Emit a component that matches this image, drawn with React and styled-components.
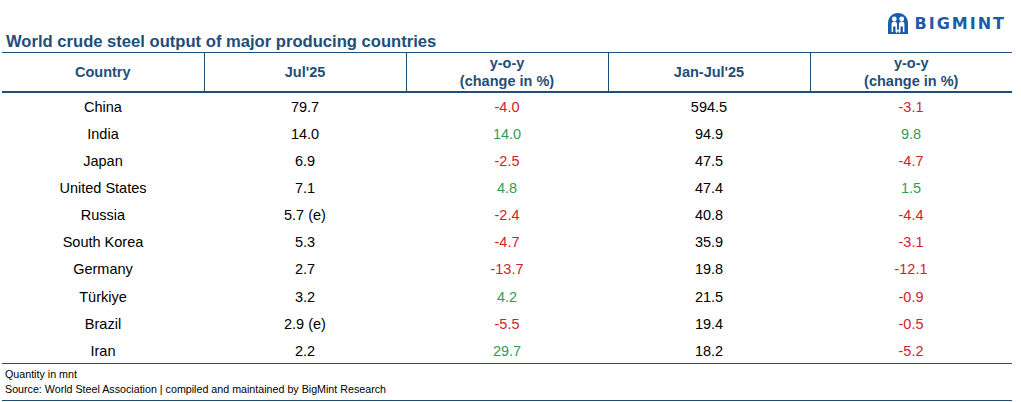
import styled, { createGlobalStyle } from 'styled-components';

const rows = [
	['China', '79.7', '-4.0', '594.5', '-3.1'],
	['India', '14.0', '14.0', '94.9', '9.8'],
	['Japan', '6.9', '-2.5', '47.5', '-4.7'],
	['United States', '7.1', '4.8', '47.4', '1.5'],
	['Russia', '5.7 (e)', '-2.4', '40.8', '-4.4'],
	['South Korea', '5.3', '-4.7', '35.9', '-3.1'],
	['Germany', '2.7', '-13.7', '19.8', '-12.1'],
	['Türkiye', '3.2', '4.2', '21.5', '-0.9'],
	['Brazil', '2.9 (e)', '-5.5', '19.4', '-0.5'],
	['Iran', '2.2', '29.7', '18.2', '-5.2'],
];

function App() {
	return (
		<>
			<GlobalStyle />
			<Page>
				<TopBar>
					<Title>World crude steel output of major producing countries</Title>
					<Logo>
						<svg width="22" height="23" viewBox="0 0 22 23">
							<path d="M11 1C5 1 1 5.5 1 11.5V22h20V11.5C21 5.5 17 1 11 1z" fill="#1b5ca8" />
							<circle cx="7.3" cy="7" r="2.4" fill="#fff" />
							<circle cx="14.7" cy="7" r="2.4" fill="#fff" />
							<path d="M4.6 12c0-1.4 1.1-2.4 2.7-2.4S10 10.6 10 12v8H8.5v-5.5H6.1V20H4.6z" fill="#fff" />
							<path d="M12 12c0-1.4 1.1-2.4 2.7-2.4s2.7 1 2.7 2.4v8h-1.5v-5.5h-2.4V20H12z" fill="#fff" />
							<path d="M9.4 21l1.6-3.4 1.6 3.4" stroke="#fff" strokeWidth="1" fill="none" />
						</svg>
						<LogoText>BIGMINT</LogoText>
					</Logo>
				</TopBar>
				<Table>
					<thead>
						<tr>
							<th>Country</th>
							<th>Jul'25</th>
							<th>
								y-o-y
								<br />
								(change in %)
							</th>
							<th>Jan-Jul'25</th>
							<th>
								y-o-y
								<br />
								(change in %)
							</th>
						</tr>
					</thead>
					<tbody>
						{rows.map((r) => (
							<tr key={r[0]}>
								<Cell>{r[0]}</Cell>
								<Cell>{r[1]}</Cell>
								<Cell $tone={r[2].startsWith('-') ? 'down' : 'up'}>{r[2]}</Cell>
								<Cell>{r[3]}</Cell>
								<Cell $tone={r[4].startsWith('-') ? 'down' : 'up'}>{r[4]}</Cell>
							</tr>
						))}
					</tbody>
				</Table>
				<Footer>
					<div>Quantity in mnt</div>
					<div>Source: World Steel Association | compiled and maintained by BigMint Research</div>
				</Footer>
			</Page>
		</>
	);
}

const GlobalStyle = createGlobalStyle`
	body {
		margin: 0;
		background: #fff;
		font-family: Arial, "Liberation Sans", sans-serif;
	}
`;

const Page = styled.div`
	width: 1010px;
	height: 402px;
	padding-left: 2px;
	overflow: hidden;
`;

const TopBar = styled.div`
	height: 52px;
	display: flex;
	justify-content: space-between;
	align-items: flex-start;
`;

const Title = styled.div`
	align-self: flex-end;
	padding-left: 4px;
	margin-bottom: 1px;
	font-size: 16.6px;
	font-weight: 700;
	color: #1f4e79;
	line-height: 18px;
`;

const Logo = styled.div`
	display: flex;
	align-items: center;
	gap: 6px;
	margin-top: 12px;
	margin-right: 6px;
`;

const LogoText = styled.span`
	font-family: "DejaVu Sans", Verdana, sans-serif;
	font-weight: 700;
	font-size: 16px;
	letter-spacing: 2px;
	color: #1b5ca8;
`;

const Table = styled.table`
	width: 1010px;
	border-collapse: collapse;
	table-layout: fixed;
	font-size: 14.5px;

	thead tr {
		border-top: 1px solid #1f4e79;
		border-bottom: 2px solid #1f4e79;
	}

	th {
		height: 38px;
		padding: 0;
		font-weight: 700;
		color: #1f4e79;
		line-height: 18px;
		text-align: center;
		vertical-align: middle;
	}

	th + th {
		border-left: 1px solid #1f4e79;
	}

	tbody tr {
		height: 27.15px;
	}

	tbody tr:last-child {
		border-bottom: 1px solid #1f4e79;
	}
`;

const Cell = styled.td`
	padding: 2px 0 0;
	text-align: center;
	vertical-align: middle;
	color: ${({ $tone }) => ($tone === 'down' ? '#d0222e' : $tone === 'up' ? '#2f9e55' : '#000')};
`;

const Footer = styled.div`
	width: 1010px;
	padding: 3px 0 3px 3px;
	font-size: 10.7px;
	line-height: 15px;
	color: #000;
	border-bottom: 1px solid #1f4e79;
`;

export default App;
